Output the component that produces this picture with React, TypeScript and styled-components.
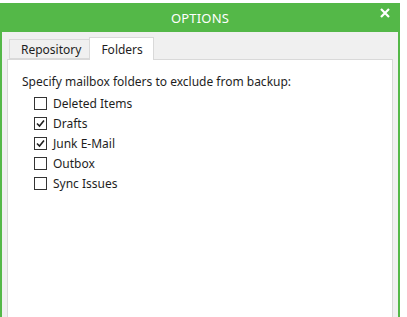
import React from 'react';
import styled, { createGlobalStyle } from 'styled-components';

const GREEN = '#54b848';

const Global = createGlobalStyle`
  html, body {
    margin: 0;
    padding: 0;
    background: #ffffff;
    overflow: hidden;
  }
  body {
    font-family: "Noto Sans", "Open Sans", sans-serif;
    font-size: 12px;
    color: #1e1e1e;
  }
`;

const Window = styled.div`
  margin-top: 3px;
  width: 400px;
  height: 314px;
  box-sizing: border-box;
  border: 2px solid ${GREEN};
  border-top: none;
  border-bottom: none;
  display: flex;
  flex-direction: column;
  background: #f0f0f0;
`;

const TitleBar = styled.div`
  position: relative;
  height: 29px;
  margin: 0 -2px;
  background: ${GREEN};
  color: #ffffff;
  display: flex;
  align-items: center;
  justify-content: center;
  font-size: 13px;
  letter-spacing: 0.2px;
`;

const CloseButton = styled.div`
  position: absolute;
  right: 10px;
  top: 5px;
  width: 10px;
  height: 10px;
  display: flex;
`;

const Body = styled.div`
  flex: 1;
  display: flex;
  flex-direction: column;
  padding: 4px 5px 0 5px;
`;

const TabStrip = styled.div`
  height: 23px;
  display: flex;
  align-items: flex-end;
  padding-left: 2px;
  position: relative;
  z-index: 1;
`;

const Tab = styled.div<{ $active?: boolean }>`
  box-sizing: border-box;
  height: ${(p) => (p.$active ? 23 : 20)}px;
  padding: ${(p) => (p.$active ? '0 10px 0 11px' : '1px 8px 0 11px')};
  margin-left: ${(p) => (p.$active ? -1 : 0)}px;
  margin-bottom: ${(p) => (p.$active ? -1 : 0)}px;
  display: flex;
  align-items: center;
  background: ${(p) => (p.$active ? '#ffffff' : '#f0f0f0')};
  border: 1px solid #d9d9d9;
  border-bottom: ${(p) => (p.$active ? 'none' : '1px solid #d9d9d9')};
  font-size: 12px;
  color: #1e1e1e;
`;

const Panel = styled.div`
  flex: 1;
  background: #ffffff;
  border: 1px solid #d9d9d9;
  border-bottom: none;
  padding: 14px 14px 0 14px;
`;

const Heading = styled.div`
  line-height: 16px;
  margin-bottom: 3px;
`;

const List = styled.div`
  display: flex;
  flex-direction: column;
  padding-left: 12px;
`;

const Row = styled.label`
  display: flex;
  align-items: center;
  height: 20px;
  gap: 6px;
`;

const Box = styled.span`
  box-sizing: border-box;
  width: 13px;
  height: 13px;
  border: 1px solid #333333;
  background: #ffffff;
  display: flex;
  align-items: center;
  justify-content: center;
`;

const folders = [
  { name: 'Deleted Items', checked: false },
  { name: 'Drafts', checked: true },
  { name: 'Junk E-Mail', checked: true },
  { name: 'Outbox', checked: false },
  { name: 'Sync Issues', checked: false },
];

const Check = () => (
  <svg width="9" height="9" viewBox="0 0 9 9">
    <path d="M1 4.5 L3.5 7 L8 1.5" fill="none" stroke="#1e1e1e" strokeWidth="1.6" />
  </svg>
);

export default function App() {
  return (
    <>
      <Global />
      <Window>
        <TitleBar>
          OPTIONS
          <CloseButton>
            <svg width="10" height="10" viewBox="0 0 10 10">
              <path d="M1 1 L9 9 M9 1 L1 9" stroke="#ffffff" strokeWidth="2.2" />
            </svg>
          </CloseButton>
        </TitleBar>
        <Body>
          <TabStrip>
            <Tab>Repository</Tab>
            <Tab $active>Folders</Tab>
          </TabStrip>
          <Panel>
            <Heading>Specify mailbox folders to exclude from backup:</Heading>
            <List>
              {folders.map((f) => (
                <Row key={f.name}>
                  <Box>{f.checked && <Check />}</Box>
                  {f.name}
                </Row>
              ))}
            </List>
          </Panel>
        </Body>
      </Window>
    </>
  );
}
